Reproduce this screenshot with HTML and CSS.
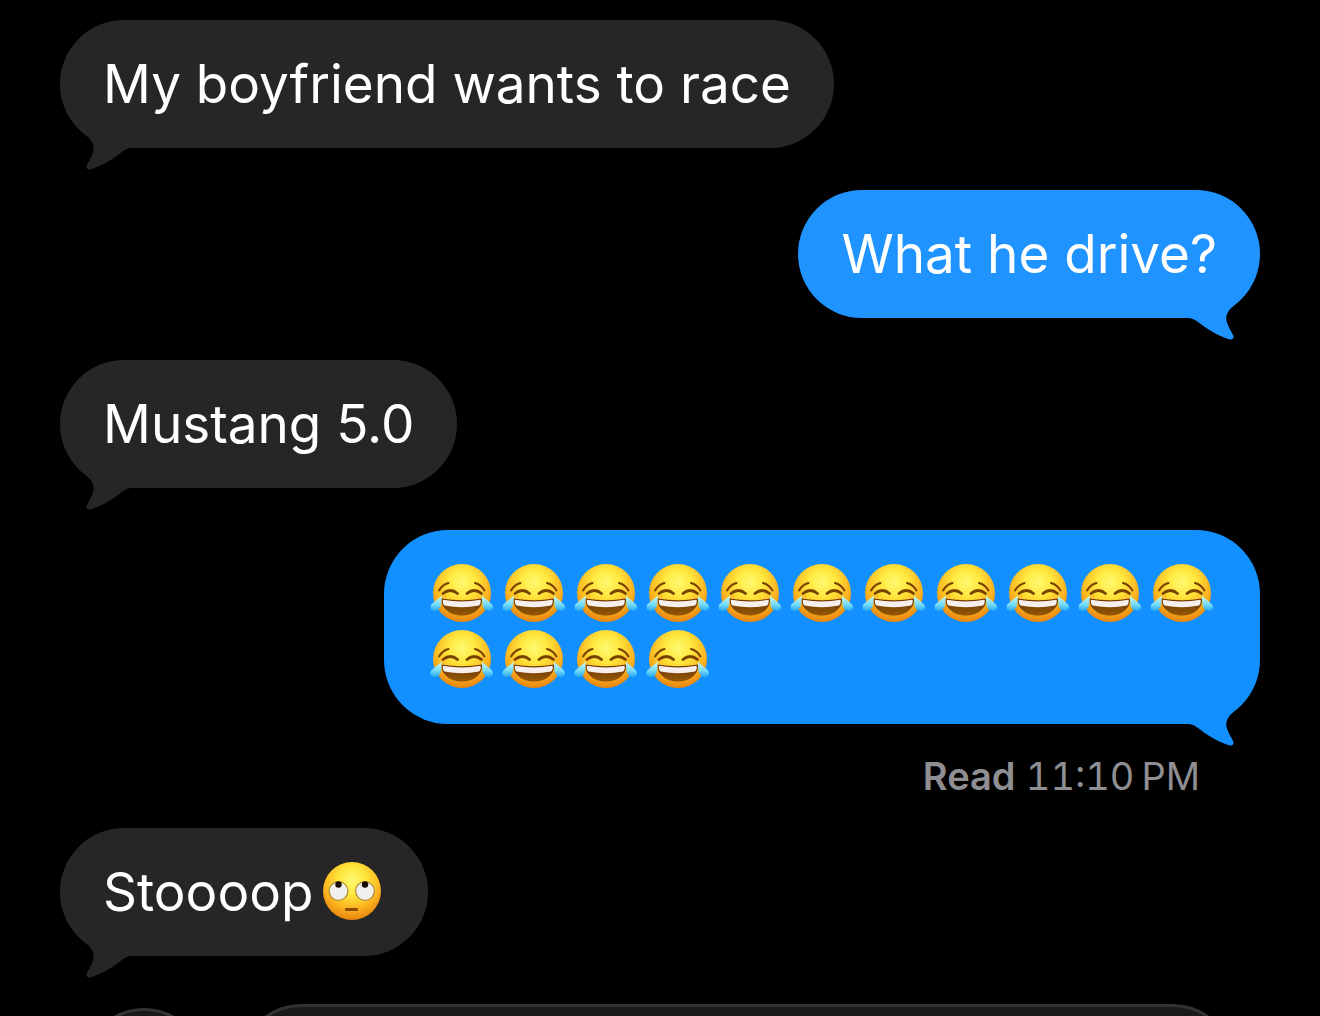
FILE: index.html
```html
<!DOCTYPE html>
<html lang="en">
<head>
<meta charset="utf-8">
<meta name="viewport" content="width=device-width, initial-scale=1">
<title>Messages</title>
<link rel="stylesheet" href="styles.css">
</head>
<body>
<svg class="sprite" aria-hidden="true">
  <defs>
    <radialGradient id="face" cx="0.5" cy="0.32" r="0.7">
      <stop offset="0" stop-color="#fffa72"/>
      <stop offset="0.35" stop-color="#ffe63c"/>
      <stop offset="0.68" stop-color="#fdb620"/>
      <stop offset="1" stop-color="#e67f0c"/>
    </radialGradient>
    <linearGradient id="mouth" x1="0" y1="0" x2="0" y2="1">
      <stop offset="0" stop-color="#6b3505"/>
      <stop offset="1" stop-color="#955906"/>
    </linearGradient>
    <linearGradient id="tear" x1="0" y1="0" x2="0" y2="1">
      <stop offset="0" stop-color="#d2f8f6"/>
      <stop offset="0.6" stop-color="#72daf5"/>
      <stop offset="1" stop-color="#22a4f4"/>
    </linearGradient>
    <symbol id="joy" viewBox="-1 -1 66 66">
      <circle cx="33" cy="31" r="29" fill="url(#face)"/>
      <g fill="none" stroke="#794200" stroke-linecap="round">
        <path d="M10 28.500Q13.500 22.500 19.500 21M46 21Q52 22.500 55.500 28.500" stroke-width="2"/>
        <path d="M14 31.500Q21.500 25.500 28.500 31.500M38 31.500Q45 25.500 52.500 31.500" stroke-width="2.800"/>
      </g>
      <path d="M12.500 36.500Q33 40 53 36.500C54 46 45 53.500 33 53.500S11.500 46 12.500 36.500Z" fill="url(#mouth)"/>
      <path d="M14 37.800Q33 41 51.500 37.800Q52.500 41 50 43.500Q33 47 15.500 43.500Q13 41 14 37.800Z" fill="#f7efeb"/>
      <path d="M12.500 33.500C12.800 38 12.500 43 10.800 46C8 50.500 2 50 1.500 45.500C1 41 8 39 12.500 33.500Z" fill="url(#tear)"/>
      <path d="M53 33.500C52.700 38 53 43 54.700 46C57.500 50.500 63.500 50 64 45.500C64.500 41 57.500 39 53 33.500Z" fill="url(#tear)"/>
    </symbol>
    <symbol id="eye-roll" viewBox="0 0 66 66">
      <circle cx="33" cy="32" r="29" fill="url(#face)"/>
      <g fill="#f0f0ee" stroke="#ae8b35" stroke-width="1.200">
        <circle cx="19.500" cy="32" r="9.400"/>
        <circle cx="46" cy="32" r="9.400"/>
      </g>
      <g fill="#1b0c03">
        <circle cx="19.500" cy="25.500" r="3.200"/>
        <circle cx="46" cy="25.500" r="3.200"/>
      </g>
      <rect x="26" y="49" width="13" height="3" rx="1" fill="#8c4d05"/>
    </symbol>
    <symbol id="tail" viewBox="0 0 74 42">
      <path d="M18.500 0Q21 3 25 6.500C33 13 36 19 32 27C30 32 27 36 26.500 38.500C26 41 29 42 32 41C44 37 54 30 62 24C65 22 67 20 74 20V0Z"/>
    </symbol>
  </defs>
</svg>
<main class="screen">
  <ol class="thread">
    <li class="message received">
      <p class="bubble">My boyfriend wants to race</p>
      <svg class="tail" aria-hidden="true"><use href="#tail"/></svg>
    </li>
    <li class="message sent">
      <p class="bubble">What he drive?</p>
      <svg class="tail" aria-hidden="true"><use href="#tail"/></svg>
    </li>
    <li class="message received">
      <p class="bubble">Mustang 5.0</p>
      <svg class="tail" aria-hidden="true"><use href="#tail"/></svg>
    </li>
    <li class="message sent latest">
      <p class="bubble emojis" role="img" aria-label="Face with tears of joy, fifteen times">
        <svg class="emoji"><use href="#joy"/></svg>
        <svg class="emoji"><use href="#joy"/></svg>
        <svg class="emoji"><use href="#joy"/></svg>
        <svg class="emoji"><use href="#joy"/></svg>
        <svg class="emoji"><use href="#joy"/></svg>
        <svg class="emoji"><use href="#joy"/></svg>
        <svg class="emoji"><use href="#joy"/></svg>
        <svg class="emoji"><use href="#joy"/></svg>
        <svg class="emoji"><use href="#joy"/></svg>
        <svg class="emoji"><use href="#joy"/></svg>
        <svg class="emoji"><use href="#joy"/></svg>
        <svg class="emoji"><use href="#joy"/></svg>
        <svg class="emoji"><use href="#joy"/></svg>
        <svg class="emoji"><use href="#joy"/></svg>
        <svg class="emoji"><use href="#joy"/></svg>
      </p>
      <svg class="tail" aria-hidden="true"><use href="#tail"/></svg>
    </li>
    <li class="receipt"><strong>Read</strong> <time datetime="23:10">11:10&#8239;PM</time></li>
    <li class="message received">
      <p class="bubble">Stoooop<svg class="emoji" role="img" aria-label="Face with rolling eyes"><use href="#eye-roll"/></svg></p>
      <svg class="tail" aria-hidden="true"><use href="#tail"/></svg>
    </li>
  </ol>
  <form class="composer">
    <button class="add" type="button" aria-label="Add attachment"></button>
    <input class="entry" type="text" aria-label="Message">
  </form>
</main>
</body>
</html>
```
FILE: styles.css
```css
* {
  box-sizing: border-box;
}

body {
  margin: 0;
  background: #000;
  color: #fff;
  font-family: Inter, "Liberation Sans", sans-serif;
}

.sprite {
  position: absolute;
  width: 0;
  height: 0;
}

.screen {
  height: 100vh;
  overflow: hidden;
}

.thread {
  display: flex;
  flex-direction: column;
  gap: 42px;
  margin: 0;
  padding: 20px 60px 48px;
  list-style: none;
}

.message {
  position: relative;
  display: flex;
}

.received {
  --fill: #262628;
}

.sent {
  --fill: #1f93ff;
  justify-content: flex-end;
}

.latest {
  --fill: #1290ff;
}

.bubble {
  display: flex;
  align-items: center;
  column-gap: 6px;
  max-width: 73%;
  margin: 0;
  padding: 31px 43px;
  border-radius: 64px;
  background: var(--fill);
  font-size: 53px;
  line-height: 66px;
}

.emojis {
  flex-wrap: wrap;
  padding: 31px 44px;
}

.emoji {
  flex: none;
  width: 66px;
  height: 66px;
}

.tail {
  position: absolute;
  bottom: -22px;
  left: 0;
  width: 74px;
  height: 42px;
  fill: var(--fill);
}

.sent .tail {
  right: 0;
  left: auto;
  transform: scaleX(-1);
}

.receipt {
  margin: -8px 0;
  padding-right: 60px;
  color: #8e8e93;
  font-size: 38px;
  font-variant-numeric: tabular-nums;
  line-height: 36px;
  text-align: right;
}

.receipt strong {
  font-weight: 600;
}

.composer {
  display: flex;
  align-items: center;
  gap: 34px;
  padding: 0 84px;
}

.add,
.entry {
  border: 3px solid #333;
  background: #1a1a1a;
  color: #fff;
}

.add {
  flex: none;
  width: 120px;
  height: 120px;
  border-radius: 50%;
}

.entry {
  flex: 1;
  min-width: 0;
  height: 128px;
  padding: 0 44px;
  border-radius: 64px;
  font: inherit;
  font-size: 53px;
}
```
